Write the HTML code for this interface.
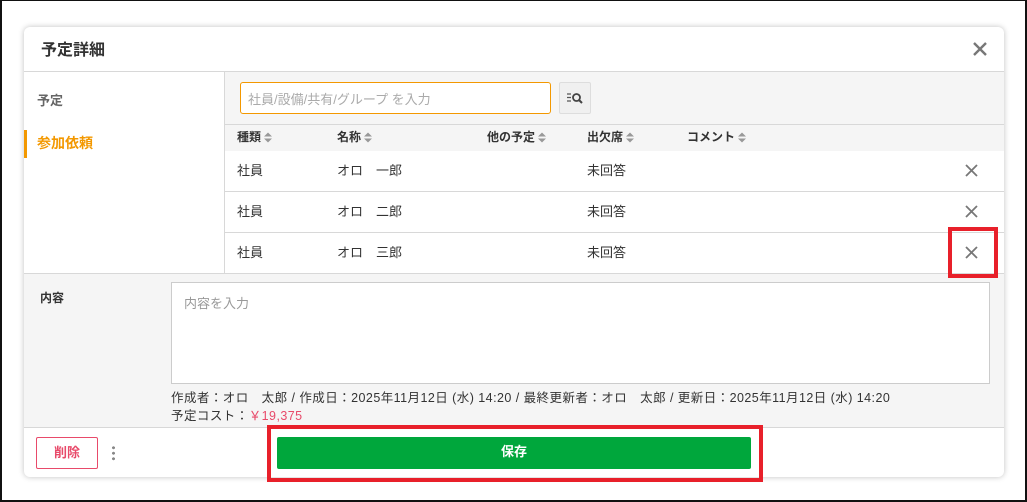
<!DOCTYPE html><html><head><meta charset="utf-8"><style>
*{box-sizing:border-box;margin:0;padding:0}
body{width:1027px;height:502px;overflow:hidden;background:#fff;font-family:"Liberation Sans","Noto Sans CJK JP",sans-serif;font-size:13px;color:#333;position:relative}
.a{position:absolute}
.frame{left:0;top:0;width:1027px;height:502px;border:2px solid #111;border-top-width:1px}
.modal{left:24px;top:27px;width:980px;height:450px;background:#fff;border-radius:6px;box-shadow:0 0 6px rgba(0,0,0,.25);overflow:hidden}
.s{display:inline-block;vertical-align:middle;margin-left:3px;width:8px;height:11px}
</style></head><body>
<div class="a frame"></div>
<div class="a modal">
 <div class="a" style="left:17px;top:9px;font-size:16px;font-weight:bold;color:#333">予定詳細</div>
 <svg class="a" style="left:948px;top:14px" width="16" height="16" viewBox="0 0 16 16"><path d="M2 2L14 14M14 2L2 14" stroke="#777" stroke-width="2.4"/></svg>
 <div class="a" style="left:0;top:44px;width:980px;height:1px;background:#d8d8d8"></div>
 <div class="a" style="left:13px;top:63px;color:#666;font-weight:bold;font-size:13px">予定</div>
 <div class="a" style="left:0;top:103px;width:3px;height:28px;background:#f39800"></div>
 <div class="a" style="left:13px;top:106px;color:#f39800;font-weight:bold;font-size:14px">参加依頼</div>
 <div class="a" style="left:200px;top:45px;width:1px;height:201px;background:#d8d8d8"></div>
 <div class="a" style="left:201px;top:45px;width:779px;height:79px;background:#f5f5f5"></div>
 <div class="a" style="left:216px;top:55px;width:311px;height:32px;border:1px solid #f39800;border-radius:3px;background:#fff;color:#aaa;padding:6px 7px;font-size:13px">社員/設備/共有/グループ を入力</div>
 <div class="a" style="left:535px;top:55px;width:32px;height:32px;border:1px solid #ddd;background:#f0f0f0;border-radius:2px"></div>
 <svg class="a" style="left:542px;top:64px" width="18" height="14" viewBox="0 0 18 14"><path d="M1 3h4M1 6.5h4M1 10h4" stroke="#555" stroke-width="1.2"/><circle cx="10.5" cy="6.5" r="3.5" fill="none" stroke="#444" stroke-width="1.8"/><path d="M13 9l3 3" stroke="#444" stroke-width="2"/></svg>
 <div class="a" style="left:201px;top:97px;width:779px;height:1px;background:#d8d8d8"></div>
 <svg width="0" height="0" style="position:absolute"><defs><symbol id="so" viewBox="0 0 8 11"><path d="M0 4.5L4 0.5L8 4.5ZM0 6.5L4 10.5L8 6.5Z" fill="#999"/></symbol></defs></svg>
 <div class="a" style="left:213px;top:101px;font-weight:bold;font-size:12px">種類<svg class="s"><use href="#so"/></svg></div>
 <div class="a" style="left:313px;top:101px;font-weight:bold;font-size:12px">名称<svg class="s"><use href="#so"/></svg></div>
 <div class="a" style="left:463px;top:101px;font-weight:bold;font-size:12px">他の予定<svg class="s"><use href="#so"/></svg></div>
 <div class="a" style="left:563px;top:101px;font-weight:bold;font-size:12px">出欠席<svg class="s"><use href="#so"/></svg></div>
 <div class="a" style="left:663px;top:101px;font-weight:bold;font-size:12px">コメント<svg class="s"><use href="#so"/></svg></div>
 <div class="a" style="left:201px;top:164px;width:779px;height:1px;background:#d8d8d8"></div>
 <div class="a" style="left:201px;top:205px;width:779px;height:1px;background:#d8d8d8"></div>
 <div class="a" style="left:213px;top:133px">社員</div><div class="a" style="left:313px;top:133px">オロ　一郎</div><div class="a" style="left:563px;top:133px">未回答</div>
 <div class="a" style="left:213px;top:174px">社員</div><div class="a" style="left:313px;top:174px">オロ　二郎</div><div class="a" style="left:563px;top:174px">未回答</div>
 <div class="a" style="left:213px;top:215px">社員</div><div class="a" style="left:313px;top:215px">オロ　三郎</div><div class="a" style="left:563px;top:215px">未回答</div>
 <svg class="a" style="left:941px;top:137px" width="13" height="13" viewBox="0 0 13 13"><path d="M1 1L12 12M12 1L1 12" stroke="#777" stroke-width="1.8"/></svg>
 <svg class="a" style="left:941px;top:178px" width="13" height="13" viewBox="0 0 13 13"><path d="M1 1L12 12M12 1L1 12" stroke="#777" stroke-width="1.8"/></svg>
 <svg class="a" style="left:941px;top:219px" width="13" height="13" viewBox="0 0 13 13"><path d="M1 1L12 12M12 1L1 12" stroke="#777" stroke-width="1.8"/></svg>
 <div class="a" style="left:0;top:246px;width:980px;height:155px;background:#f5f5f5;border-top:1px solid #d8d8d8;border-bottom:1px solid #d8d8d8"></div>
 <div class="a" style="left:16px;top:262px;font-weight:bold;font-size:12px">内容</div>
 <div class="a" style="left:147px;top:255px;width:819px;height:102px;background:#fff;border:1px solid #ccc;color:#999;padding:10px 12px;font-size:13px">内容を入力</div>
 <div class="a" style="left:147px;top:360px;font-size:12.5px;letter-spacing:0.45px;white-space:nowrap">作成者：オロ　太郎 / 作成日：2025年11月12日 (水) 14:20 / 最終更新者：オロ　太郎 / 更新日：2025年11月12日 (水) 14:20</div>
 <div class="a" style="left:147px;top:378px;font-size:12.5px;letter-spacing:0.45px">予定コスト：<span style="color:#e84a6a">￥19,375</span></div>
 <div class="a" style="left:12px;top:410px;width:62px;height:32px;border:1px solid #e84a6a;border-radius:2px;color:#e84a6a;font-weight:bold;text-align:center;line-height:30px;font-size:13px">削除</div>
 <div class="a" style="left:88px;top:418px;width:3px;height:16px;background:radial-gradient(circle,#888 1.4px,transparent 1.6px) 0 0/3px 5.5px"></div>
 <div class="a" style="left:253px;top:410px;width:474px;height:32px;background:#00a73c;border-radius:2px;color:#fff;font-weight:bold;text-align:center;line-height:30px;font-size:13px">保存</div>
</div>
<div class="a" style="left:948px;top:227px;width:50px;height:51px;border:4px solid #e8202a"></div>
<div class="a" style="left:267px;top:425px;width:496px;height:57px;border:4px solid #e8202a"></div>
</body></html>
